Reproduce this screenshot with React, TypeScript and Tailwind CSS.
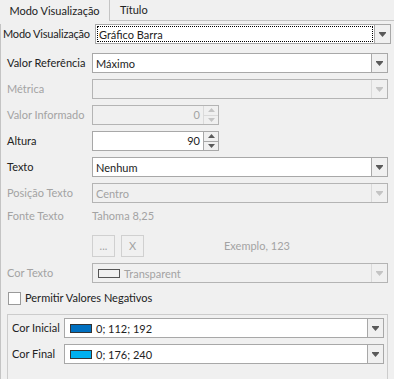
import React from 'react';

const FONT = { fontFamily: 'Lato, "Liberation Sans", Arial, sans-serif' };

const Arrow = ({ disabled }: { disabled?: boolean }) => (
  <svg width="7" height="5" viewBox="0 0 7 5" className="block">
    <rect x="0" y="0" width="7" height="1" fill={disabled ? '#c4c4c4' : '#5a5a5a'} />
    <path d="M0 1 H7 L3.5 5 Z" fill={disabled ? '#c4c4c4' : '#5a5a5a'} />
  </svg>
);

const SpinArrow = ({ up, disabled }: { up?: boolean; disabled?: boolean }) => (
  <svg width="7" height="4" viewBox="0 0 7 4" className="block">
    <path d={up ? 'M0 4 H7 L3.5 0 Z' : 'M0 0 H7 L3.5 4 Z'} fill={disabled ? '#c4c4c4' : '#5a5a5a'} />
  </svg>
);

interface ComboProps {
  value?: string;
  disabled?: boolean;
  swatch?: string;
  focused?: boolean;
  className?: string;
}

const Combo: React.FC<ComboProps> = ({ value, disabled, swatch, focused, className = '' }) => (
  <div
    className={`flex h-[20px] border ${disabled ? 'border-[#b4b4b4] bg-[#f0f0f0]' : 'border-[#a8a8a8] bg-white'} ${className}`}
  >
    <div className="relative flex flex-1 items-center pl-[3px]">
      {focused && <div className="absolute inset-[1px] border border-dotted border-black" />}
      {swatch && (
        <span
          className={`mr-[4px] ml-[2px] inline-block h-[9px] w-[22px] border ${disabled ? 'border-[#555]' : 'border-[#333]'}`}
          style={{ background: swatch }}
        />
      )}
      <span className={`whitespace-nowrap text-[11px] leading-none ${disabled ? 'text-[#a3a3a3]' : 'text-[#222]'}`}>
        {value}
      </span>
    </div>
    <div
      className={`flex w-[16px] items-center justify-center border-l bg-[#f0f0f0] ${disabled ? 'border-[#dadada]' : 'border-[#a8a8a8]'}`}
    >
      <Arrow disabled={disabled} />
    </div>
  </div>
);

const Spin = ({ value, disabled }: { value: string; disabled?: boolean }) => (
  <div className={`flex h-[20px] w-[127px] border ${disabled ? 'border-[#b4b4b4] bg-[#f0f0f0]' : 'border-[#a8a8a8] bg-white'}`}>
    <div
      className={`flex flex-1 items-center justify-end pr-[3px] text-[11px] ${disabled ? 'text-[#a3a3a3]' : 'text-[#222]'}`}
    >
      {value}
    </div>
    <div className={`flex w-[15px] flex-col border-l bg-[#f0f0f0] ${disabled ? 'border-[#dadada]' : 'border-[#a8a8a8]'}`}>
      <div className="flex flex-1 items-center justify-center">
        <SpinArrow up disabled={disabled} />
      </div>
      <div className={`h-px ${disabled ? 'bg-[#dadada]' : 'bg-[#a8a8a8]'}`} />
      <div className="flex flex-1 items-center justify-center">
        <SpinArrow disabled={disabled} />
      </div>
    </div>
  </div>
);

const Row = ({ label, disabled, children }: { label: string; disabled?: boolean; children: React.ReactNode }) => (
  <div className="flex h-[20px] items-center">
    <div className={`w-[91px] whitespace-nowrap pl-[6px] text-[11px] ${disabled ? 'text-[#a3a3a3]' : 'text-[#222]'}`}>
      {label}
    </div>
    <div className="flex-1">{children}</div>
  </div>
);

export default function App() {
  return (
    <div className="h-[379px] w-[394px] overflow-hidden bg-[#f0f0f0] select-none" style={FONT}>
      {/* Tabs */}
      <div className="flex h-[21px]">
        <div className="flex w-[109px] items-center justify-center pt-[1px] text-[11px] whitespace-nowrap text-[#222]">
          Modo Visualização
        </div>
        <div className="flex flex-1 items-center border-b border-l border-[#c4c4c4] pl-[10px] text-[11px] text-[#222]">
          Título
        </div>
      </div>

      <div className="h-[358px] border-l border-[#c4c4c4] pr-[3px]">
        {/* Modo Visualização */}
        <div className="mt-[3px] flex h-[20px] items-center">
          <div className="w-[94px] shrink-0 whitespace-nowrap pl-[2px] text-[11px] tracking-[-0.2px] text-[#222]">
            Modo Visualização
          </div>
          <Combo value="Gráfico Barra" focused className="flex-1" />
        </div>

        <div className="mt-[9px] flex flex-col gap-[6px] pr-[3px]">
          <Row label="Valor Referência">
            <Combo value="Máximo" />
          </Row>
          <Row label="Métrica" disabled>
            <Combo disabled />
          </Row>
          <Row label="Valor Informado" disabled>
            <Spin value="0" disabled />
          </Row>
          <Row label="Altura">
            <Spin value="90" />
          </Row>
          <Row label="Texto">
            <Combo value="Nenhum" />
          </Row>
          <Row label="Posição Texto" disabled>
            <Combo value="Centro" disabled />
          </Row>
        </div>

        {/* Fonte */}
        <div className="mt-[6px] flex h-[14px] items-center text-[11px] whitespace-nowrap text-[#a3a3a3]">
          <div className="w-[91px] pl-[6px]">Fonte Texto</div>
          <div>Tahoma 8,25</div>
        </div>
        <div className="mt-[12px] flex h-[22px] items-center pl-[91px]">
          <div className="flex h-[22px] w-[23px] items-center justify-center border border-[#d0d0d0] text-[11px] text-[#a3a3a3]">
            ...
          </div>
          <div className="ml-[6px] flex h-[22px] w-[23px] items-center justify-center border border-[#d0d0d0] text-[11px] text-[#a3a3a3]">
            X
          </div>
          <div className="ml-[80px] whitespace-nowrap text-[11px] text-[#a3a3a3]">Exemplo, 123</div>
        </div>

        <div className="mt-[6px] pr-[3px]">
          <Row label="Cor Texto" disabled>
            <Combo value="Transparent" swatch="#f0f0f0" disabled />
          </Row>
        </div>

        {/* Checkbox */}
        <div className="mt-[9px] flex h-[13px] items-center pl-[7px]">
          <div className="h-[13px] w-[13px] border border-[#9a9a9a] bg-white" />
          <span className="ml-[4px] whitespace-nowrap text-[11px] text-[#222]">Permitir Valores Negativos</span>
        </div>

        {/* Group */}
        <div className="mt-[9px] mr-[3px] ml-[6px] h-[80px] border border-[#cccccc] px-[3px] pt-[3px]">
          <div className="flex flex-col gap-[6px]">
            <div className="flex h-[20px] items-center">
              <div className="w-[53px] whitespace-nowrap pl-[1px] text-[11px] text-[#222]">Cor Inicial</div>
              <Combo value="0; 112; 192" swatch="#0070c0" className="flex-1" />
            </div>
            <div className="flex h-[20px] items-center">
              <div className="w-[53px] whitespace-nowrap pl-[1px] text-[11px] text-[#222]">Cor Final</div>
              <Combo value="0; 176; 240" swatch="#00b0f0" className="flex-1" />
            </div>
          </div>
        </div>
      </div>
    </div>
  );
}
